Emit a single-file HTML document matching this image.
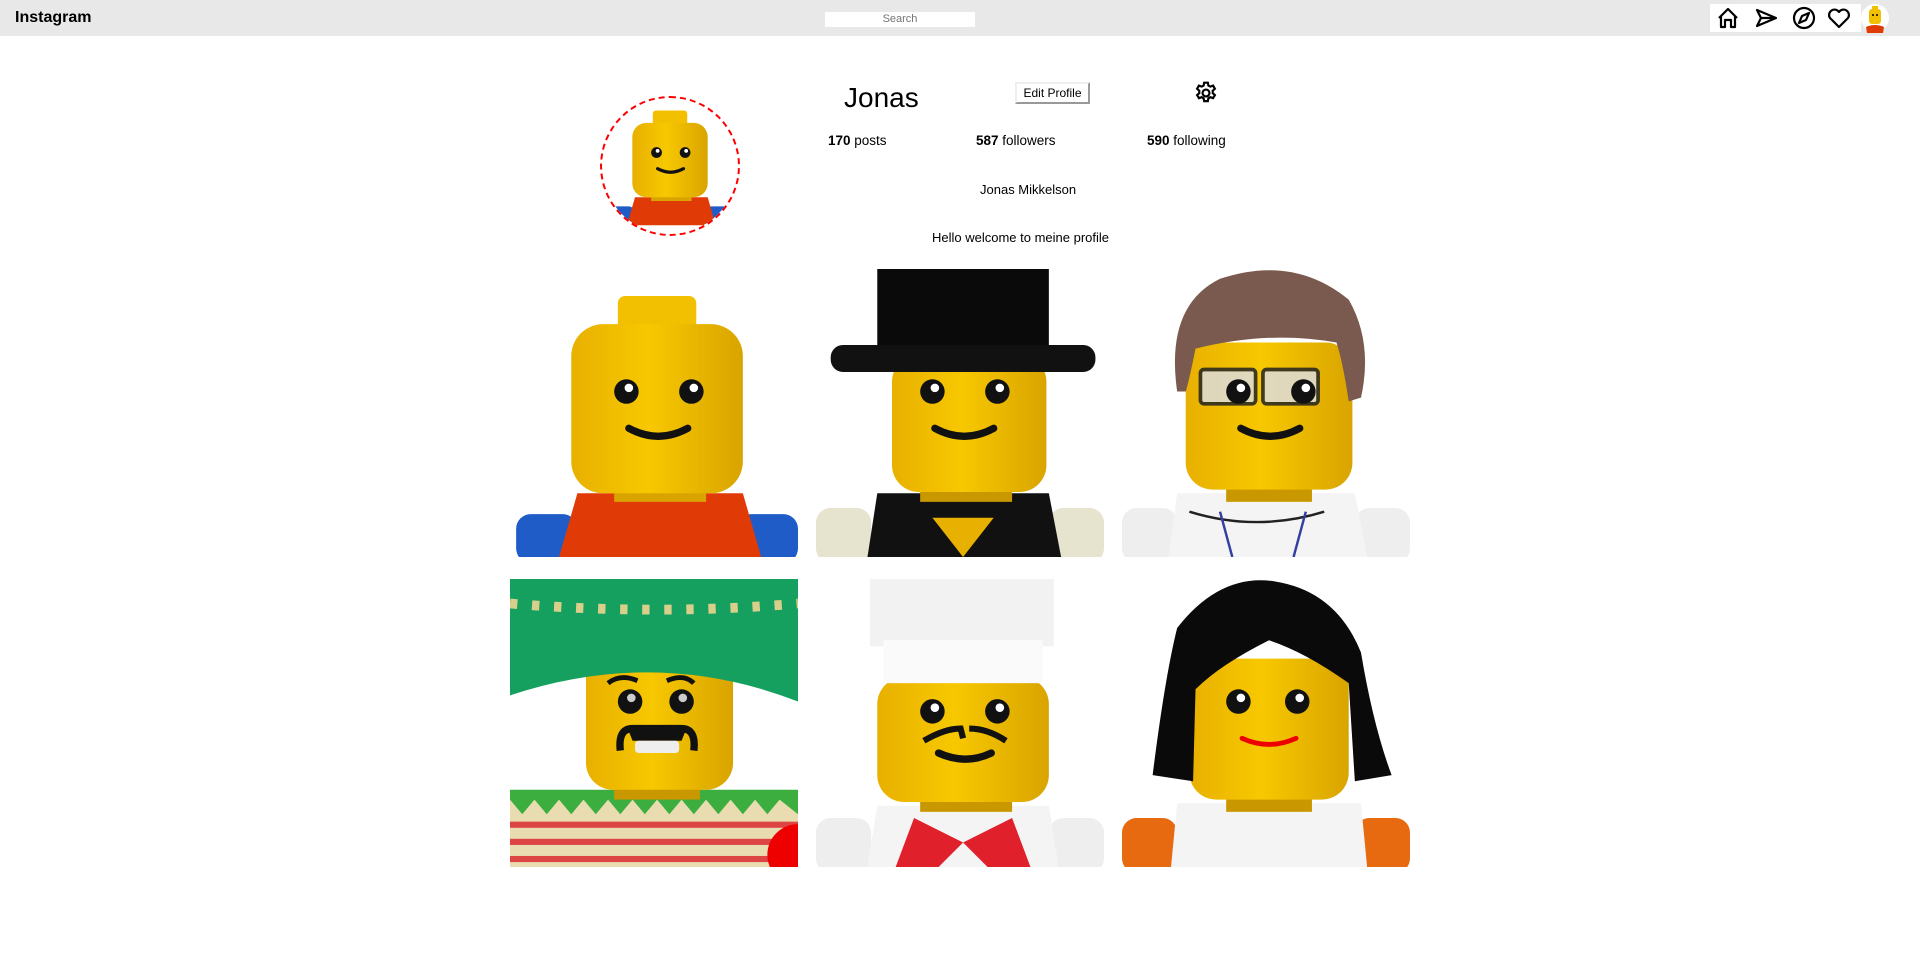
<!DOCTYPE html>
<html><head><meta charset="utf-8">
<style>
*{margin:0;padding:0;box-sizing:border-box}
body{width:1920px;height:969px;background:#fff;font-family:"Liberation Sans",sans-serif;position:relative;overflow:hidden;color:#000}
.hdr{position:absolute;left:0;top:0;width:1920px;height:36px;background:#e8e8e8}
.logo{position:absolute;left:15px;top:9px;font-weight:bold;font-size:16px}
.search{position:absolute;left:825px;top:12px;width:150px;height:15px;background:#fff;font-size:11px;color:#757575;text-align:center;line-height:15px}
.icons{position:absolute;left:1710px;top:4px;width:151px;height:28px;background:#fff}
.t{position:absolute;font-size:13px;white-space:nowrap}
.btn{position:absolute;left:1015px;top:82px;width:75px;height:22px;background:#fff;border:2px solid;border-color:#eee #999 #999 #eee;font-size:12px;text-align:center;line-height:18px}
.av{position:absolute;left:600px;top:96px;width:140px;height:140px;border-radius:50%;border:2.5px dashed #f00;overflow:hidden}
.cell{position:absolute;width:288px;height:288px;overflow:hidden}
</style></head><body>
<svg width="0" height="0" style="position:absolute">
<defs>
<linearGradient id="y" x1="0" x2="1"><stop offset="0" stop-color="#e8b000"/><stop offset=".45" stop-color="#f7c800"/><stop offset="1" stop-color="#d9a400"/></linearGradient>
<g id="face"><circle cx="95" cy="100" r="10" fill="#111"/><circle cx="148" cy="100" r="10" fill="#111"/><circle cx="97" cy="97" r="3.5" fill="#fff"/><circle cx="150" cy="97" r="3.5" fill="#fff"/><path d="M97 130 Q121 143 145 130" stroke="#111" stroke-width="6" fill="none" stroke-linecap="round"/></g>
<g id="l1">
<rect x="5" y="200" width="50" height="40" rx="12" fill="#1f5cc8"/><rect x="185" y="200" width="50" height="40" rx="12" fill="#1f5cc8"/>
<path d="M55 183 H190 L205 235 H40Z" fill="#e03a06"/>
<rect x="85" y="170" width="75" height="20" fill="#d9a400"/>
<rect x="88" y="22" width="64" height="32" rx="6" fill="#f2c000"/>
<rect x="50" y="45" width="140" height="138" rx="26" fill="url(#y)"/>
<use href="#face"/>
</g>
</defs></svg>

<div class="hdr">
<div class="logo">Instagram</div>
<div class="search">Search</div>
<div class="icons">
<svg width="151" height="28" viewBox="0 0 151 28" fill="none" stroke="#000" stroke-width="2.2" stroke-linejoin="round">
<path d="M9 14 L18 5 L27 14 M11 12 V23 H15 V16 H21 V23 H25 V12"/>
<path d="M47 6 L66 14 L47 22 L51 14 Z M51 14 H66"/>
<circle cx="94" cy="14" r="10"/><path d="M99 9 L96 16 L89 19 L92 12 Z"/>
<path d="M129 23 L120 14 A5 5 0 0 1 129 8 A5 5 0 0 1 138 14 Z"/>
</svg>
</div>
<svg style="position:absolute;left:1861px;top:3px" width="28" height="30" viewBox="0 0 28 30">
<circle cx="14" cy="15" r="14" fill="#fff"/>
<path d="M5 24 Q14 20 23 24 L22 30 H6Z" fill="#e03a06"/>
<rect x="8" y="6" width="12" height="15" rx="3" fill="#f2c000"/><rect x="11" y="3" width="6" height="4" fill="#f2c000"/>
<circle cx="12" cy="12" r="1" fill="#000"/><circle cx="16" cy="12" r="1" fill="#000"/>
</svg>
</div>

<div class="av"><svg width="140" height="140" viewBox="-10 -5 260 260" style="margin:-2px 0 0 -2px"><use href="#l1"/></svg></div>

<div class="t" style="left:844px;top:82px;font-size:28px">Jonas</div>
<div class="btn">Edit Profile</div>
<svg style="position:absolute;left:1193px;top:80px" width="26" height="26" viewBox="0 0 24 24" fill="none" stroke="#000" stroke-width="2">
<circle cx="12" cy="12" r="3.2"/>
<path d="M10.3 2.5h3.4l.5 2.6 1.8 1 2.5-.9 1.7 2.9-2 1.8v2.2l2 1.8-1.7 2.9-2.5-.9-1.8 1-.5 2.6h-3.4l-.5-2.6-1.8-1-2.5.9-1.7-2.9 2-1.8v-2.2l-2-1.8 1.7-2.9 2.5.9 1.8-1z"/>
</svg>
<div class="t" style="left:828px;top:133px;font-size:13.5px"><b>170</b> posts</div>
<div class="t" style="left:976px;top:133px;font-size:13.5px"><b>587</b> followers</div>
<div class="t" style="left:1147px;top:133px;font-size:13.5px"><b>590</b> following</div>
<div class="t" style="left:980px;top:182px">Jonas Mikkelson</div>
<div class="t" style="left:932px;top:230px">Hello welcome to meine profile</div>

<div class="cell" style="left:510px;top:269px"><svg width="288" height="288" viewBox="0 0 235 235"><use href="#l1"/></svg></div>

<div class="cell" style="left:816px;top:269px"><svg width="288" height="288" viewBox="0 0 235 235">
<rect x="0" y="195" width="45" height="45" rx="12" fill="#e6e3cf"/><rect x="190" y="195" width="45" height="45" rx="12" fill="#e6e3cf"/>
<path d="M50 183 H190 L200 235 H42Z" fill="#111"/><path d="M95 203 H145 L120 235Z" fill="#e8b000"/>
<rect x="85" y="170" width="75" height="20" fill="#c99800"/>
<rect x="62" y="70" width="126" height="112" rx="22" fill="url(#y)"/>
<use href="#face"/>
<rect x="50" y="0" width="140" height="72" fill="#0a0a0a"/><rect x="12" y="62" width="216" height="22" rx="10" fill="#111"/>
</svg></div>

<div class="cell" style="left:1122px;top:269px"><svg width="288" height="288" viewBox="0 0 235 235">
<rect x="0" y="195" width="45" height="45" rx="12" fill="#eee"/><rect x="190" y="195" width="45" height="45" rx="12" fill="#eee"/>
<path d="M45 183 H190 L200 235 H38Z" fill="#f4f4f4"/><path d="M55 198 Q110 215 165 198" stroke="#222" stroke-width="2" fill="none"/><path d="M80 198 L90 235 M150 198 L140 235" stroke="#3340a0" stroke-width="2"/>
<rect x="85" y="170" width="70" height="20" fill="#c99800"/>
<rect x="52" y="60" width="136" height="120" rx="22" fill="url(#y)"/>
<rect x="64" y="82" width="45" height="28" rx="3" fill="#ddd" stroke="#222" stroke-width="3" opacity=".85"/><rect x="115" y="82" width="45" height="28" rx="3" fill="#ddd" stroke="#222" stroke-width="3" opacity=".85"/>
<use href="#face" />
<path d="M45 100 Q35 30 80 8 Q140 -12 185 25 Q205 60 195 105 L185 108 Q180 75 175 60 Q120 50 60 65 Q55 90 52 100Z" fill="#7a5a4e"/>
</svg></div>

<div class="cell" style="left:510px;top:579px"><svg width="288" height="288" viewBox="0 0 235 235">
<path d="M0 175 H235 V235 H0Z" fill="#e8dcb0"/>
<path d="M0 180 L10 192 L20 180 L30 192 L40 180 L50 192 L60 180 L70 192 L80 180 L90 192 L100 180 L110 192 L120 180 L130 192 L140 180 L150 192 L160 180 L170 192 L180 180 L190 192 L200 180 L210 192 L220 180 L235 192 V172 H0Z" fill="#3cae40"/>
<rect x="0" y="198" width="235" height="5" fill="#d44"/><rect x="0" y="212" width="235" height="5" fill="#d44"/><rect x="0" y="226" width="235" height="5" fill="#d44"/>
<circle cx="235" cy="225" r="25" fill="#e00"/>
<rect x="85" y="160" width="70" height="20" fill="#c99800"/>
<rect x="62" y="60" width="120" height="112" rx="22" fill="url(#y)"/>
<circle cx="98" cy="100" r="10" fill="#111"/><circle cx="140" cy="100" r="10" fill="#111"/><circle cx="99" cy="97" r="3.5" fill="#ccc"/><circle cx="141" cy="97" r="3.5" fill="#ccc"/>
<path d="M80 85 Q90 77 104 83 M128 83 Q142 77 150 85" stroke="#111" stroke-width="4" fill="none"/>
<path d="M90 140 Q88 122 100 122 H140 Q152 122 150 140" stroke="#111" stroke-width="6" fill="none"/><path d="M96 122 H144 L140 132 H100Z" fill="#111"/><rect x="102" y="132" width="36" height="10" rx="3" fill="#eee"/>
<path d="M0 0 H235 V100 Q120 55 0 95Z" fill="#15a060"/>
<path d="M0 20 Q120 30 235 20" stroke="#d8cf8a" stroke-width="8" stroke-dasharray="6 12" fill="none"/>
</svg></div>

<div class="cell" style="left:816px;top:579px"><svg width="288" height="288" viewBox="0 0 235 235">
<rect x="0" y="195" width="45" height="45" rx="12" fill="#eee"/><rect x="190" y="195" width="45" height="45" rx="12" fill="#eee"/>
<path d="M50 185 H190 L198 235 H42Z" fill="#f4f4f4"/><path d="M80 195 L120 215 L160 195 L175 235 H140 L120 215 L100 235 H65Z" fill="#e0202a"/>
<rect x="85" y="170" width="75" height="20" fill="#c99800"/>
<rect x="50" y="80" width="140" height="102" rx="22" fill="url(#y)"/>
<circle cx="95" cy="108" r="10" fill="#111"/><circle cx="148" cy="108" r="10" fill="#111"/><circle cx="97" cy="105" r="3.5" fill="#fff"/><circle cx="150" cy="105" r="3.5" fill="#fff"/>
<path d="M88 132 Q105 122 118 122 L120 130 M125 122 Q140 122 155 132" stroke="#111" stroke-width="5" fill="none"/><path d="M100 142 Q122 152 143 142" stroke="#111" stroke-width="6" fill="none" stroke-linecap="round"/>
<rect x="44" y="0" width="150" height="55" fill="#f2f2f2"/><rect x="55" y="50" width="130" height="35" fill="#fafafa"/>
</svg></div>

<div class="cell" style="left:1122px;top:579px"><svg width="288" height="288" viewBox="0 0 235 235">
<rect x="0" y="195" width="45" height="45" rx="12" fill="#e86a10"/><rect x="190" y="195" width="45" height="45" rx="12" fill="#e86a10"/>
<path d="M45 183 H195 L200 235 H40Z" fill="#f4f4f4"/>
<rect x="85" y="170" width="70" height="20" fill="#c99800"/>
<rect x="55" y="65" width="130" height="115" rx="22" fill="url(#y)"/>
<circle cx="95" cy="100" r="10" fill="#111"/><circle cx="143" cy="100" r="10" fill="#111"/><circle cx="97" cy="97" r="3.5" fill="#fff"/><circle cx="145" cy="97" r="3.5" fill="#fff"/>
<path d="M98 130 Q120 140 142 130" stroke="#e00" stroke-width="4" fill="none" stroke-linecap="round"/>
<path d="M25 160 Q35 80 45 40 Q80 -5 125 2 Q175 10 195 60 Q205 120 220 160 L190 165 L185 85 Q150 60 120 50 Q80 70 60 90 L58 165Z" fill="#0a0a0a"/>
</svg></div>
</body></html>
